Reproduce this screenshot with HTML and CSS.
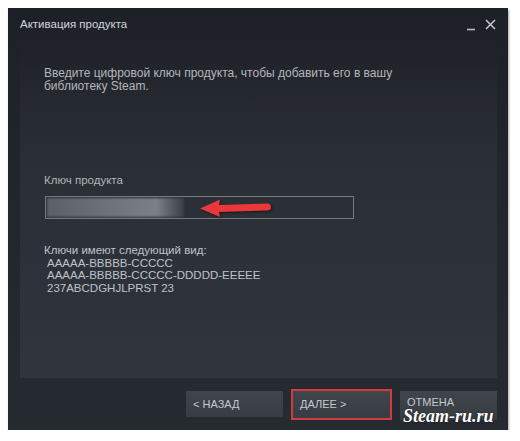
FILE: index.html
```html
<!DOCTYPE html>
<html lang="ru">
<head>
<meta charset="utf-8">
<title>Активация продукта</title>
<link rel="stylesheet" href="styles.css">
</head>
<body>
<div class="window">
  <div class="titlebar">
    <span class="title">Активация продукта</span>
    <div class="controls">
      <svg class="ctl" width="10" height="12" viewBox="0 0 10 12"><line x1="1" y1="10.5" x2="9" y2="10.5" stroke="#b9bdc1" stroke-width="1.6"/></svg>
      <svg class="ctl" width="11" height="11" viewBox="0 0 11 11"><path d="M1 1L10 10M10 1L1 10" stroke="#c4c8cc" stroke-width="1.5" fill="none"/></svg>
    </div>
  </div>
  <div class="panel">
    <p class="intro">Введите цифровой ключ продукта, чтобы добавить его в вашу<br>библиотеку Steam.</p>
    <div class="label">Ключ продукта</div>
    <div class="input">
      <div class="blurred"></div>
      <svg class="arrow" width="80" height="21" viewBox="0 0 80 21">
        <path d="M2 11.5 L22 2.5 L21 8 L69 6.5 Q73 6.5 73 10 Q73 13.5 69 13.5 L21 15 L22 20 Z" fill="#e8383a"/>
      </svg>
    </div>
    <div class="formats">
      <div>Ключи имеют следующий вид:</div>
      <div class="fmt">AAAAA-BBBBB-CCCCC</div>
      <div class="fmt">AAAAA-BBBBB-CCCCC-DDDDD-EEEEE</div>
      <div class="fmt">237ABCDGHJLPRST 23</div>
    </div>
  </div>
  <div class="footer">
    <div class="btn">&lt; НАЗАД</div>
    <div class="btn btn-marked">ДАЛЕЕ &gt;</div>
    <div class="btn btn-cancel">ОТМЕНА<span class="watermark">Steam-ru.ru</span></div>
  </div>
</div>
</body>
</html>
```

FILE: styles.css
```css
html, body {
  margin: 0;
  padding: 0;
  background: #ffffff;
}
body {
  font-family: "Liberation Sans", Arial, sans-serif;
}
.window {
  margin: 8px 0 0 8px;
  width: 500px;
  height: 422px;
  background: linear-gradient(180deg, #1d2027 0%, #22252c 40%, #262a31 100%);
  box-shadow: 1px 2px 2px rgba(0, 0, 0, 0.35);
  display: flex;
  flex-direction: column;
}
.titlebar {
  height: 36px;
  display: flex;
  align-items: flex-start;
  justify-content: space-between;
  padding: 9px 12px 0 12px;
  box-sizing: border-box;
}
.title {
  color: #d2d6da;
  font-size: 11.5px;
  line-height: 14px;
}
.controls {
  display: flex;
  gap: 9px;
  padding-top: 2px;
}
.ctl {
  display: block;
}
.panel {
  height: 334px;
  margin: 0 11px 0 12px;
  padding: 23px 24px 0 24px;
  box-sizing: border-box;
  background: linear-gradient(180deg, rgba(40, 44, 51, 0) 0%, #2a2e35 35%, #30353e 100%);
}
.intro {
  margin: 0;
  color: #b3b7bb;
  font-size: 12px;
  line-height: 13px;
}
.label {
  margin-top: 80px;
  color: #b3b7bb;
  font-size: 11.5px;
  line-height: 14px;
}
.input {
  position: relative;
  margin-top: 9px;
  width: 309px;
  height: 23px;
  box-sizing: border-box;
  border: 1px solid #747982;
  background: #2b2f36;
  margin-left: 1px;
}
.blurred {
  position: absolute;
  left: 1px;
  top: 1px;
  width: 137px;
  height: 19px;
  background: linear-gradient(90deg, #5b6067 0%, #6e7379 45%, #7b8086 80%, rgba(80, 85, 92, 0.4) 100%);
  filter: blur(1.2px);
}
.arrow {
  position: absolute;
  left: 152px;
  top: 0;
  filter: drop-shadow(1px 1px 1px rgba(0, 0, 0, 0.5));
}
.formats {
  margin-top: 25px;
  color: #bfc3c7;
  font-size: 11.5px;
  line-height: 12.5px;
}
.fmt {
  padding-left: 3px;
}
.footer {
  flex: 1;
  display: flex;
  justify-content: flex-end;
  align-items: flex-start;
  gap: 10px;
  padding: 13px 11px 0 0;
  box-sizing: border-box;
}
.btn {
  position: relative;
  width: 97px;
  height: 26px;
  box-sizing: border-box;
  padding: 7px 0 0 7px;
  background: linear-gradient(180deg, #40454c 0%, #383c43 100%);
  color: #c3c8cd;
  font-size: 11px;
  line-height: 12px;
}
.btn-marked {
  outline: 2px solid #d23b3d;
  outline-offset: 0;
  height: 27px;
}
.btn-cancel {
  height: 29px;
  padding-top: 5px;
}
.watermark {
  position: absolute;
  left: 3px;
  top: 18px;
  color: #ffffff;
  font-family: "Liberation Serif", "Times New Roman", serif;
  font-style: italic;
  font-weight: bold;
  font-size: 18px;
  line-height: 14px;
  white-space: nowrap;
  text-shadow: 0 0 2px rgba(0, 0, 0, 0.6);
}
```
